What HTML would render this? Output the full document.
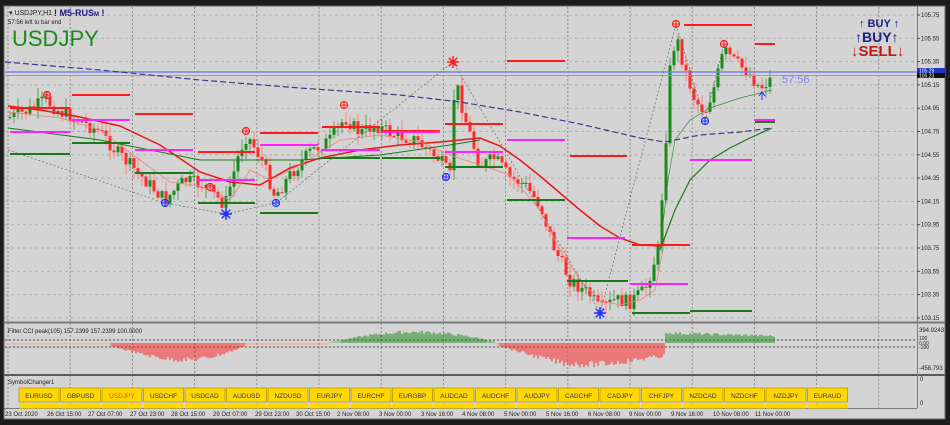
<!DOCTYPE html>
<html><head><meta charset="utf-8">
<style>
html,body{margin:0;padding:0;background:#1c1c1c;width:950px;height:425px;overflow:hidden}
svg{display:block}
text{font-family:"Liberation Sans",sans-serif}
</style></head>
<body>
<svg id="s" width="950" height="425" viewBox="0 0 950 425" xmlns="http://www.w3.org/2000/svg">
<rect x="0" y="0" width="950" height="425" fill="#1c1c1c"/>
<rect x="4" y="6" width="941" height="413" fill="#d4d4d4"/>
<g id="grid"></g>
<line x1="4" y1="322.5" x2="945" y2="322.5" stroke="#7a7a7a" stroke-width="2"/>
<line x1="4" y1="375" x2="945" y2="375" stroke="#5a5a5a" stroke-width="2"/>
<line x1="917.5" y1="6" x2="917.5" y2="408" stroke="#7a7a7a"/>
<line x1="4" y1="408.5" x2="917" y2="408.5" stroke="#7a7a7a"/>
<rect x="4" y="6" width="941" height="413" fill="none" stroke="#6a6a6a"/>
<g id="main"></g>
<g id="osc"></g>
<text x="9" y="15" font-size="7" fill="#222">▾ USDJPY,H1</text>
<text x="54" y="16" font-size="9" font-weight="bold" fill="#1a1a8a">! M5-RUS<tspan font-size="6">M</tspan> !</text>
<text x="8" y="24" font-size="6" fill="#222">57:56 left to bar end</text>
<text x="12" y="46" font-size="22" fill="#1a8a1a">USDJPY</text>
<text x="782" y="83" font-size="11" fill="#7a84e0">57:56</text>
<text x="859" y="27" font-size="11" font-weight="bold" fill="#1a237e">↑ BUY ↑</text>
<text x="855" y="42" font-size="14" font-weight="bold" fill="#1a237e">↑BUY↑</text>
<text x="851" y="56" font-size="15" font-weight="bold" fill="#c01818">↓SELL↓</text>
<g id="axis" font-size="6" fill="#222"></g>
<rect x="917" y="68" width="28" height="5" fill="#2030c0"/>
<rect x="917" y="73" width="28" height="5" fill="#111"/>
<text x="919" y="72.5" font-size="5" fill="#fff">105.29</text>
<text x="919" y="77.5" font-size="5" fill="#fff">105.23</text>
<text x="8" y="333" font-size="6" fill="#222">Filter CCI peak(105)  157.2399  157.2399  100.0000</text>
<text x="919" y="332" font-size="6" fill="#222">394.9243</text>
<text x="919" y="340" font-size="5" fill="#222">100</text>
<text x="919" y="345" font-size="5" fill="#222">0.00</text>
<text x="919" y="349" font-size="5" fill="#222">-100</text>
<text x="919" y="370" font-size="6" fill="#222">-458.793</text>
<text x="8" y="384" font-size="6" fill="#222">SymbolChanger1</text>
<text x="920" y="381" font-size="6" fill="#222">0</text>
<text x="920" y="405" font-size="6" fill="#222">0</text>
<g id="btns"></g>
<g id="times" font-size="6" fill="#222"></g>
</svg>
<script>
var NS="http://www.w3.org/2000/svg";
function el(p,t,a){var e=document.createElementNS(NS,t);for(var k in a)e.setAttribute(k,a[k]);document.getElementById(p).appendChild(e);return e;}
function line(p,x1,y1,x2,y2,c,w,d){var a={x1:x1,y1:y1,x2:x2,y2:y2,stroke:c,"stroke-width":w||1};if(d)a["stroke-dasharray"]=d;return el(p,"line",a);}
for(var x=8;x<917;x+=62.2){line("grid",x,7,x,408,"#8a8a8a",1,"2,2");}
for(var i=0;i<14;i++){var y=15+i*23.3;line("grid",5,y,917,y,"#b0b0b0",1,"3,3");}
line("grid",5,340,917,340,"#444",1,"2,2");line("grid",5,347,917,347,"#444",1,"2,2");
var pr=["105.75","105.55","105.35","105.15","104.95","104.75","104.55","104.35","104.15","103.95","103.75","103.55","103.35","103.15"];
for(var i=0;i<14;i++){var y=15+i*23.3;line("axis",917,y,920,y,"#444",1);var t=el("axis","text",{x:921,y:y+2});t.textContent=pr[i];}
var tl=["23 Oct 2020","26 Oct 15:00","27 Oct 07:00","27 Oct 23:00","28 Oct 15:00","29 Oct 07:00","29 Oct 23:00","30 Oct 15:00","2 Nov 08:00","3 Nov 00:00","3 Nov 16:00","4 Nov 08:00","5 Nov 00:00","5 Nov 16:00","6 Nov 08:00","9 Nov 00:00","9 Nov 16:00","10 Nov 08:00","11 Nov 00:00"];
var tx=[5,47,88,130,171,213,255,296,337,379,421,462,504,546,588,629,671,713,755];
for(var i=0;i<tl.length;i++){var t=el("times","text",{x:tx[i],y:416});t.textContent=tl[i];}
var bn=["EURUSD","GBPUSD","USDJPY","USDCHF","USDCAD","AUDUSD","NZDUSD","EURJPY","EURCHF","EURGBP","AUDCAD","AUDCHF","AUDJPY","CADCHF","CADJPY","CHFJPY","NZDCAD","NZDCHF","NZDJPY","EURAUD"];
for(var i=0;i<bn.length;i++){var bx=19+i*41.5;
el("btns","rect",{x:bx,y:388,width:40,height:14,fill:"#ffd700",stroke:"#b09000","stroke-width":0.7});
el("btns","rect",{x:bx,y:403.5,width:40,height:5,fill:"#ffd700"});
var t=el("btns","text",{x:bx+20,y:398,"font-size":6.5,"text-anchor":"middle",fill:i==2?"#ff4a00":"#303070"});t.textContent=bn[i];}
var P=[[8,118],[30,110],[45,100],[60,112],[75,118],[100,132],[115,150],[130,165],[150,185],[165,200],[185,180],[205,186],[225,205],[240,150],[247,135],[262,160],[275,196],[290,175],[310,152],[330,140],[345,118],[360,133],[375,125],[395,135],[415,140],[440,160],[450,176],[455,78],[465,118],[480,166],[495,158],[510,178],[525,185],[540,205],[555,250],[570,280],[590,295],[600,310],[615,300],[630,302],[645,290],[658,250],[664,170],[670,70],[676,35],[685,70],[695,100],[705,112],[715,85],[724,50],[735,62],[748,72],[760,88],[772,78]];
function py(x){for(var i=0;i<P.length-1;i++){if(x>=P[i][0]&&x<=P[i+1][0]){var f=(x-P[i][0])/(P[i+1][0]-P[i][0]);return P[i][1]+f*(P[i+1][1]-P[i][1]);}}return P[P.length-1][1];}
var seed=7;function rnd(){seed=(seed*9301+49297)%233280;return seed/233280;}
var prev=py(8);
for(var x=10;x<=772;x+=4){var c=py(x)+(rnd()-0.5)*14;var o=prev;var up=c<o;var col=up?"#1a8a1a":"#ff2a2a";
var hi=Math.min(o,c)-rnd()*10-1,lo=Math.max(o,c)+rnd()*10+1;
line("main",x,hi,x,lo,up?"#5aa05a":"#ff8080",1);
el("main","rect",{x:x-1.5,y:Math.min(o,c),width:3,height:Math.max(1,Math.abs(o-c)),fill:col});prev=c;}
function pl(pts,c,w,d,op){var a={points:pts,fill:"none",stroke:c,"stroke-width":w};if(d)a["stroke-dasharray"]=d;if(op)a.opacity=op;el("main","polyline",a);}
line("main",5,72,917,72,"#7a84e8",1.5);line("main",5,75.5,917,75.5,"#a0a0a0",1);
pl("5,62 100,70 200,80 300,88 400,95 460,102 520,112 580,124 640,138 665,142 700,135 740,132 772,128","#3a3a8a",1.2,"6,3");
pl("8,106 40,110 80,117 120,126 160,145 200,172 230,182 260,185 290,168 320,158 360,150 400,145 440,142 460,140 480,138 500,146 520,160 540,176 560,193 580,210 600,226 620,238 640,245 660,246","#e81818",1.5);
pl("8,112 60,118 100,130 140,160 170,182 200,186 230,200 250,170 270,180 300,165 340,140 380,135 420,142 450,155 480,165 510,175 540,210 560,250 580,280 600,300 620,305 640,300 655,290 665,240","#f08080",0.8);
pl("660,250 675,210 690,180 710,160 730,148 750,138 772,128","#1a7a1a",1.2);
pl("8,128 100,140 200,160 300,160 380,155 450,145 480,140","#1a7a1a",1);
pl("660,250 668,180 675,140 690,120 710,108 740,98 772,90","#3a8a3a",0.7);
pl("8,150 165,203 226,214 276,203 453,62 600,313 676,24 705,121 724,44","#607060",0.7,"2,2");
var L=[["#ff1a1a",[[10,70,108],[72,130,95],[135,193,114],[198,255,152],[260,318,133],[322,380,127],[382,440,131],[445,503,124],[507,565,61],[570,627,156],[632,690,245],[684,752,25],[755,775,44]]],
["#ff20ff",[[10,70,132],[72,130,120],[135,193,150],[198,255,180],[260,318,145],[322,380,150],[382,440,132],[445,503,152],[507,565,140],[567,625,238],[630,688,284],[690,752,160],[755,775,120]]],
["#1a7a1a",[[10,70,154],[72,130,143],[135,193,173],[198,255,203],[260,318,213],[322,380,158],[382,440,158],[445,503,167],[507,565,200],[567,628,281],[632,690,313],[690,752,311],[755,775,122]]]];
L.forEach(function(g){g[1].forEach(function(s){line("main",s[0],s[2],s[1],s[2],g[0],2);});});
function cp(x,y,c){el("main","circle",{cx:x,cy:y,r:3.5,fill:"none",stroke:c,"stroke-width":1.2});line("main",x-3,y,x+3,y,c,1);line("main",x,y-3,x,y+3,c,1);}
[[47,95],[210,187],[246,131],[344,105],[676,24],[724,44]].forEach(function(p){cp(p[0],p[1],"#ff2020");});
[[165,203],[276,203],[446,177],[705,121]].forEach(function(p){cp(p[0],p[1],"#2030ff");});
function star(x,y,c){for(var a=0;a<8;a++){var r=a*Math.PI/4;line("main",x,y,x+6*Math.cos(r),y+6*Math.sin(r),c,1.5);}el("main","circle",{cx:x,cy:y,r:2.5,fill:c});}
star(453,62,"#ff2020");star(226,214,"#2030ff");star(600,313,"#2030ff");
line("main",762,93,762,100,"#2030ff",1);el("main","path",{d:"M759,96 L762,92 L765,96",fill:"none",stroke:"#2030ff"});
function ov(x){
 if(x<110)return 1.5;if(x<245){var f=(x-110)/135;return 3+17*Math.sin(f*Math.PI)*(0.6+0.4*f);}
 if(x<330)return 2; if(x<495){var f=(x-335)/160;return -(2+9*Math.sin(f*Math.PI));}
 if(x<665){var f=(x-500)/165;return 3+24*Math.sin(Math.min(1,f*1.3)*Math.PI*0.5)*(1-Math.max(0,f-0.4));}
 if(x<776){var f=(x-668)/108;return -(10-3*f);}return 0;}
for(var x=6;x<=776;x+=2){var v=ov(x)*(0.85+0.3*rnd());var b=343;
 if(v>0){line("osc",x,b,x,b+v,v>3?"#ff2020":"#ff9a70",1);}else{line("osc",x,b,x,b+v,v<-3?"#1a8a1a":"#70b070",1);}}
</script>
</body></html>
